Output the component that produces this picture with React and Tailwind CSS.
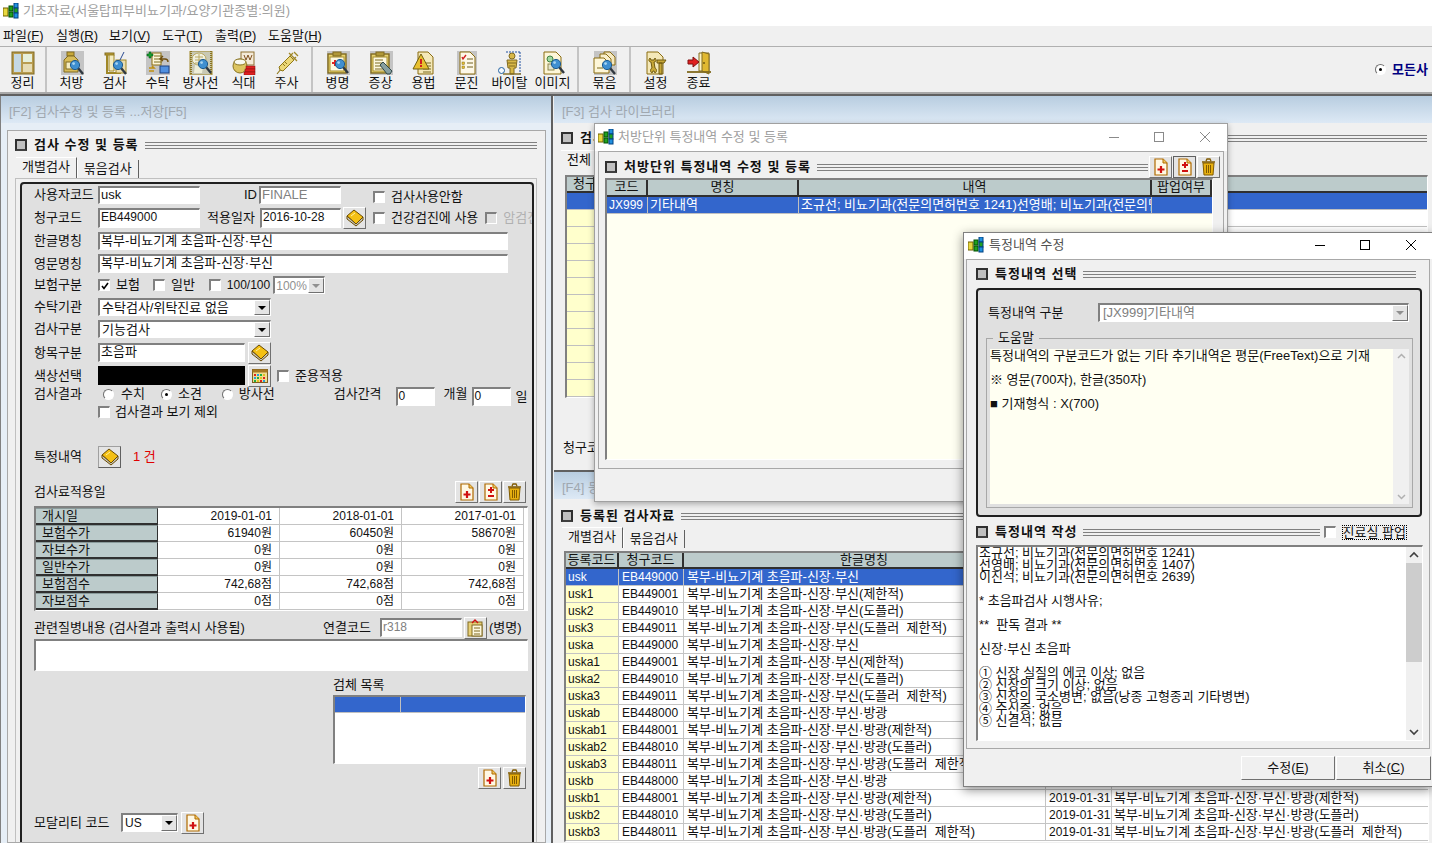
import React from "react";

const sunken = "border-t-2 border-l-2 border-t-[#808080] border-l-[#808080] border-b border-r border-b-white border-r-white bg-white";
const raised = "border border-t-white border-l-white border-b-[#707070] border-r-[#707070] bg-[#e4e4e4] flex items-center justify-center";
const num = "text-[12px]";

const AppIcon = () => (
  <svg width="16" height="16" viewBox="0 0 16 16" className="shrink-0">
    <rect x="0" y="5" width="5" height="8" fill="#e8d840" stroke="#706000" />
    <rect x="6" y="3" width="4" height="5" fill="#20a020" stroke="#005000" />
    <rect x="6" y="9" width="4" height="5" fill="#20a020" stroke="#005000" />
    <rect x="11" y="0" width="4" height="5" fill="#2090e0" stroke="#004080" />
    <rect x="11" y="5" width="4" height="5" fill="#20a020" stroke="#004080" />
    <rect x="11" y="10" width="4" height="5" fill="#2090e0" stroke="#004080" />
  </svg>
);

const Mag = ({ x = 15, y = 14 }) => (
  <g>
    <line x1={x + 3} y1={y + 3} x2={x + 8} y2={y + 9} stroke="#303840" strokeWidth="2.4" />
    <circle cx={x} cy={y} r="4.6" fill="#3f8fd0" stroke="#1c5a90" />
    <circle cx={x - 1.4} cy={y - 1.4} r="1.4" fill="#a8d4f0" />
  </g>
);

const Page = ({ x = 5, y = 1, w = 15, h = 20, fill = "#fdf6d8" }) => (
  <path d={`M${x} ${y}h${w - 5}l5 5v${h - 5}h-${w}z`} fill={fill} stroke="#8a6c10" />
);

const Lines = ({ x, y, n = 3, w = 8 }) => (
  <g stroke="#7a6a20">
    {Array.from({ length: n }).map((_, i) => (
      <line key={i} x1={x} y1={y + i * 3} x2={x + w} y2={y + i * 3} />
    ))}
  </g>
);

const Tool = {
  layout: (
    <g>
      <rect x="1" y="1" width="22" height="22" fill="#b89c50" stroke="#806a20" />
      <rect x="3" y="3" width="7" height="18" fill="#c4d8e4" />
      <rect x="12" y="3" width="9" height="8" fill="#e6f0dc" />
      <rect x="12" y="13" width="9" height="8" fill="#e6dcb4" />
    </g>
  ),
  rx: (
    <g>
      <rect x="1" y="0" width="23" height="24" fill="#c4c4c4" />
      <rect x="7" y="1" width="7" height="4" fill="#c8a838" stroke="#806a20" />
      <path d="M4 9l4-4h6l4 4v12H4z" fill="#d8bc58" stroke="#806a20" />
      <rect x="6" y="11" width="9" height="7" fill="#f4ecc0" stroke="#806a20" />
      <Mag x={15} y={14} />
    </g>
  ),
  test: (
    <g>
      <rect x="2" y="2" width="9" height="2" fill="#c8a838" stroke="#806a20" />
      <path d="M4 4v18h14" fill="none" stroke="#a08828" strokeWidth="2" />
      <path d="M6 4h5v16H6z" fill="#f4ecc0" stroke="#a08828" />
      <rect x="13" y="9" width="10" height="13" fill="#e8dcb0" stroke="#a08828" />
      <line x1="21" y1="1" x2="17" y2="9" stroke="#2a4a90" />
      <Mag x={15} y={14} />
    </g>
  ),
  out: (
    <g>
      <rect x="0" y="0" width="24" height="24" fill="#c4c4c4" />
      <rect x="6" y="2" width="9" height="12" fill="#fdf6d8" stroke="#8a6c10" />
      <Lines x={8} y={5} />
      <path d="M3 1h2v2h2v2H5v2H3V5H1V3h2z" fill="#18a030" stroke="#005010" strokeWidth=".5" />
      <path d="M17 5l-3 3 3 2M14 8h5c2 0 3 1 3 3" fill="none" stroke="#705010" strokeWidth="1.4" />
      <rect x="14" y="15" width="9" height="7" fill="#5090e0" stroke="#1c4080" />
      <path d="M3 17h5l-2-2M8 20H3" fill="none" stroke="#c09010" strokeWidth="1.6" />
    </g>
  ),
  xray: (
    <g>
      <rect x="1" y="0" width="22" height="24" fill="#c8c8b4" stroke="#a08828" />
      <path d="M2 0v24M22 0v24" stroke="#8a7420" strokeWidth="2" strokeDasharray="1 1" />
      <ellipse cx="10" cy="8" rx="7" ry="6" fill="#f0f0e0" stroke="#b8a860" />
      <path d="M6 6h8M6 9h8M6 12h8M10 3v14" stroke="#b8a860" />
      <path d="M6 14l-1 8h8l1-6z" fill="#eeeed8" />
      <Mag x={14} y={13} />
    </g>
  ),
  meal: (
    <g>
      <rect x="9" y="1" width="13" height="13" fill="#f4ead8" stroke="#907030" />
      <path d="M12 4l2 5 2-5 2 5 2-5" fill="none" stroke="#805020" />
      <ellipse cx="8" cy="15" rx="7" ry="7" fill="#dcc460" stroke="#8a7420" />
      <ellipse cx="8" cy="11" rx="6" ry="3" fill="#f8f8f0" stroke="#8a7420" />
      <rect x="14" y="15" width="9" height="3" fill="#e02020" stroke="#801010" strokeWidth=".5" />
      <rect x="13" y="18" width="10" height="3" fill="#e02020" stroke="#801010" strokeWidth=".5" />
      <rect x="12" y="21" width="11" height="3" fill="#e02020" stroke="#801010" strokeWidth=".5" />
    </g>
  ),
  inject: (
    <g>
      <path d="M2 23l4-5" stroke="#907818" strokeWidth="1.2" />
      <path d="M5 19l-1-3L15 5l4 4L8 20z" fill="#ecd878" stroke="#907818" />
      <path d="M15 5l3-3M18 9l3-3M19 1l4 4M14 2l8 8" stroke="#a08828" strokeWidth="1.3" fill="none" />
      <path d="M8 13l2 2M10 11l2 2" stroke="#907818" />
    </g>
  ),
  dx: (
    <g>
      <rect x="1" y="0" width="23" height="24" fill="#c4c4c4" />
      <rect x="2" y="3" width="18" height="19" fill="#e8d470" stroke="#806a20" strokeWidth="1.4" />
      <rect x="4" y="6" width="14" height="14" fill="#fdf8e0" stroke="#a89030" />
      <rect x="7" y="1" width="8" height="4" fill="#b09838" stroke="#806a20" />
      <path d="M6 12h6M9 9v6" stroke="#e02020" strokeWidth="2" />
      <Mag x={14} y={13} />
    </g>
  ),
  sx: (
    <g>
      <rect x="1" y="0" width="23" height="24" fill="#c4c4c4" />
      <rect x="2" y="3" width="18" height="19" fill="#e8d470" stroke="#806a20" strokeWidth="1.4" />
      <rect x="4" y="6" width="14" height="14" fill="#fdf8e0" stroke="#a89030" />
      <rect x="7" y="1" width="8" height="4" fill="#b09838" stroke="#806a20" />
      <Lines x={6} y={9} n={4} w={8} />
      <path d="M11 14l3-3 9 9-2 3-3 0z" fill="#88a0a0" stroke="#304848" />
    </g>
  ),
  usage: (
    <g>
      <Page x={6} y={1} w={15} h={22} fill="#f4e8b8" />
      <Lines x={11} y={12} n={4} w={8} />
      <path d="M9 3L1 18h16z" fill="#e8c030" stroke="#706010" />
      <rect x="8" y="8" width="2" height="5" fill="#d02020" />
      <rect x="8" y="14" width="2" height="2" fill="#d02020" />
    </g>
  ),
  ask: (
    <g>
      <rect x="2" y="0" width="20" height="24" fill="#c4c4c4" />
      <Page x={5} y={1} w={15} h={22} fill="#fdf8e8" />
      <path d="M7 6l1 2 3-4" fill="none" stroke="#d02020" strokeWidth="1.4" />
      <rect x="7" y="11" width="2.5" height="2.5" fill="#e8c030" stroke="#806a20" strokeWidth=".5" />
      <rect x="7" y="15" width="2.5" height="2.5" fill="#e8c030" stroke="#806a20" strokeWidth=".5" />
      <line x1="12" y1="8" x2="18" y2="8" stroke="#706020" />
      <line x1="12" y1="12" x2="18" y2="12" stroke="#706020" />
      <line x1="12" y1="16" x2="18" y2="16" stroke="#706020" />
    </g>
  ),
  vital: (
    <g>
      <path d="M8 1h14M22 1v22" stroke="#2050a0" strokeDasharray="2 1" fill="none" />
      <circle cx="14" cy="5" r="3" fill="#d8b848" stroke="#806a20" />
      <path d="M9 9h10l-1 8h-2v6h-4v-6h-2z" fill="#d8b848" stroke="#806a20" />
      <path d="M10 12h8M11 15h6" stroke="#806a20" />
      <path d="M5 23h18" stroke="#806a20" strokeWidth="1.4" />
      <circle cx="3.5" cy="19.5" r="3" fill="#f4f8fc" stroke="#2060a0" />
    </g>
  ),
  image: (
    <g>
      <Page x={3} y={1} w={17} h={22} />
      <circle cx="9" cy="8" r="3" fill="#a0d8a0" stroke="#408040" />
      <rect x="7" y="13" width="6" height="6" fill="#e4e4cc" stroke="#908a50" />
      <Mag x={15} y={13} />
    </g>
  ),
  bundle: (
    <g>
      <rect x="1" y="0" width="23" height="24" fill="#c4c4c4" />
      <Page x={11} y={1} w={11} h={13} fill="#f4e8c0" />
      <Page x={7} y={3} w={11} h={14} fill="#f8efcc" />
      <Page x={1} y={7} w={15} h={15} fill="#fdf6d8" />
      <line x1="4" y1="17" x2="10" y2="17" stroke="#7a6a20" />
      <Mag x={14} y={14} />
    </g>
  ),
  setup: (
    <g>
      <Page x={3} y={1} w={16} h={22} fill="#f4e8b8" />
      <path d="M6 7c-2 2-1 4 1 4l1 6c-2 1-2 4 0 5l1-2h1l1 2c2-1 2-4 0-5l-1-6c2 0 3-2 1-4l-1 2H7z" fill="#c8a838" stroke="#705a10" />
      <path d="M13 9h9l-2 3h-7zM15 12h3v11h-3z" fill="#c8a838" stroke="#705a10" />
    </g>
  ),
  exit: (
    <g>
      <path d="M12 2h10v18h-10z" fill="#fff4c0" stroke="#806a20" />
      <path d="M15 1l7 2v20l-7-3z" fill="#e0b830" stroke="#806a20" />
      <circle cx="17" cy="12" r="1" fill="#705a10" />
      <path d="M1 9h5V6l6 5-6 5v-3H1z" fill="#e02020" stroke="#801010" />
      <path d="M0 21h24" stroke="#806a20" strokeWidth="1.8" />
    </g>
  ),
};

const BookIcon = () => (
  <svg width="18" height="18" viewBox="0 0 18 18">
    <path d="M1 7L8 1l9 7-7 7z" fill="#f4c014" stroke="#6a4a00" />
    <path d="M1 7v3l9 7 7-6V8l-7 7z" fill="#c8c8c0" stroke="#6a4a00" />
    <path d="M5 7l4-3" stroke="#fff0a0" />
  </svg>
);

const DocIcon = ({ minus }) => (
  <svg width="14" height="18" viewBox="0 0 14 18">
    <path d="M1 1h8l4 4v12H1z" fill="#fff8e4" stroke="#b06a00" strokeWidth="1.2" />
    <path d="M9 1v4h4" fill="#f0c860" stroke="#b06a00" />
    {minus ? (
      <path d="M7 4v6M4 7h6M4 13h6" stroke="#d01010" strokeWidth="2" />
    ) : (
      <path d="M7 8v7M3.5 11.5h7" stroke="#d01010" strokeWidth="2.2" />
    )}
  </svg>
);

const TrashIcon = () => (
  <svg width="15" height="18" viewBox="0 0 15 18">
    <path d="M1 4h13M5 3l1-2h3l1 2" fill="none" stroke="#805a00" strokeWidth="1.3" />
    <path d="M2 5h11l-1 12H3z" fill="#e8b010" stroke="#805a00" />
    <path d="M5.5 7v8M7.5 7v8M9.5 7v8" stroke="#805a00" />
  </svg>
);

const ClipIcon = () => (
  <svg width="17" height="18" viewBox="0 0 17 18">
    <rect x="1" y="3" width="14" height="14" fill="#e8d078" stroke="#806a20" />
    <rect x="5" y="6" width="10" height="11" fill="#fdf8e0" stroke="#806a20" />
    <path d="M7 9h6M7 12h6M7 15h6" stroke="#806a20" />
    <path d="M5 4l3-3 3 3" fill="none" stroke="#d01010" strokeWidth="1.4" />
  </svg>
);

const PaletteIcon = () => (
  <svg width="16" height="14" viewBox="0 0 16 14">
    <rect x="0.5" y="0.5" width="15" height="13" fill="#f0dc90" stroke="#806020" />
    <rect x="0.5" y="0.5" width="15" height="3" fill="#a87820" />
    {[5, 8, 11].map((y, r) =>
      [2, 5, 8, 11].map((x, c) => (
        <rect key={x + "-" + y} x={x} y={y} width="2" height="2" fill={["#e02020", "#20a0e0", "#20b040", "#e0c020"][(r + c) % 4]} />
      ))
    )}
  </svg>
);

const Check = ({ on, dim, className = "" }) => (
  <span className={`w-[12px] h-[12px] shrink-0 flex items-center justify-center ${sunken} ${dim ? "!bg-[#e0e0e0]" : ""} ${className}`}>
    {on && (
      <svg width="8" height="8" viewBox="0 0 8 8">
        <path d="M1 4l2 2.5L7 1" fill="none" stroke="#000" strokeWidth="1.6" />
      </svg>
    )}
  </span>
);

const Radio = ({ on, className = "" }) => (
  <span className={`w-[11px] h-[11px] shrink-0 rounded-full flex items-center justify-center bg-white border border-t-[#707070] border-l-[#707070] border-b-white border-r-white ${className}`}>
    {on && <span className="w-[3px] h-[3px] rounded-full bg-black" />}
  </span>
);

const Arrow = ({ dim }) => (
  <span className={`w-[16px] h-full shrink-0 ${raised}`}>
    <span className={`border-x-[4px] border-x-transparent border-t-[4px] ${dim ? "border-t-[#909090]" : "border-t-black"}`} />
  </span>
);

const Section = ({ title, children, className = "" }) => (
  <div className={`flex items-center h-[14px] ${className}`}>
    <span className="w-[12px] h-[12px] shrink-0 border-2 border-[#303030] bg-[#c0c0c0] border-b-[#404040]" />
    <span className="ml-[7px] font-bold tracking-[1px] whitespace-nowrap">{title}</span>
    <span className="ml-[6px] flex-1 h-[7px] border-y border-[#808080] flex items-center min-w-0">
      <span className="w-full h-px bg-[#808080]" />
    </span>
    {children}
  </div>
);

const Tabs = ({ names, className = "" }) => (
  <div className={`flex items-end ${className}`}>
    {names.map((n, i) => (
      <span
        key={n}
        className={`whitespace-nowrap px-[6px] border-r border-r-[#606060] ${i === 0 ? "h-[21px] border-t border-t-white bg-[#f0f0f0] leading-[17px]" : "h-[18px] leading-[18px] border-l border-l-white"}`}
      >
        {n}
      </span>
    ))}
  </div>
);

const PanelHead = ({ children }) => (
  <div className="h-[27px] shrink-0 bg-gradient-to-b from-[#b8cde0] to-[#dde9f5] pl-[8px] pt-[8px] text-[#a0a8b0] leading-[16px] whitespace-nowrap">
    {children}
  </div>
);

const Label = ({ children, className = "" }) => <span className={`w-[64px] shrink-0 whitespace-nowrap ${className}`}>{children}</span>;

const Input = ({ value, w, dim, className = "" }) => (
  <span className={`${sunken} ${w} h-full shrink-0 pl-px leading-[14px] overflow-hidden whitespace-nowrap ${dim ? "text-[#808080]" : ""} ${className}`}>{value}</span>
);

const Select = ({ value }) => (
  <span className={`${sunken} w-[173px] h-full flex items-center justify-between pl-[2px]`}>
    <span>{value}</span>
    <Arrow />
  </span>
);

const IconBtn = ({ children, className = "" }) => <span className={`${raised} w-[23px] h-[22px] shrink-0 ${className}`}>{children}</span>;

const feeRows = [
  ["개시일", "2019-01-01", "2018-01-01", "2017-01-01"],
  ["보험수가", "61940원", "60450원", "58670원"],
  ["자보수가", "0원", "0원", "0원"],
  ["일반수가", "0원", "0원", "0원"],
  ["보험점수", "742,68점", "742,68점", "742,68점"],
  ["자보점수", "0점", "0점", "0점"],
];

const base = "복부-비뇨기계 초음파-신장·부신";
const suffix = ["", "(제한적)", "(도플러)", "(도플러  제한적)"];
const groups = [
  ["usk", base, "EB4490"],
  ["uska", base, "EB4490"],
  ["uskab", base + "·방광", "EB4480"],
  ["uskb", base + "·방광", "EB4480"],
];
const regRows = groups.flatMap(([code, name, claim]) =>
  ["00", "01", "10", "11"].map((tail, i) => ({
    code: code + (i === 0 ? "" : i),
    claim: claim + tail,
    name: name + suffix[i],
  }))
);

const helpLines = ["특정내역의 구분코드가 없는 기타 추기내역은 평문(FreeText)으로 기재", "※ 영문(700자), 한글(350자)", "■ 기재형식 : X(700)"];
const noteLines = [
  "조규선; 비뇨기과(전문의면허번호 1241)",
  "선영배; 비뇨기과(전문의면허번호 1407)",
  "이진석; 비뇨기과(전문의면허번호 2639)",
  "",
  "* 초음파검사 시행사유;",
  "",
  "**  판독 결과 **",
  "",
  "신장·부신 초음파",
  "",
  "① 신장 실질의 에코 이상; 없음",
  "② 신장의 크기 이상; 없음",
  "③ 신장의 국소병변; 없음(낭종 고형종괴 기타병변)",
  "④ 수신증; 없음",
  "⑤ 신결석; 없음",
];

const toolbar = [
  [["정리", "layout"]],
  [["처방", "rx"], ["검사", "test"], ["수탁", "out"], ["방사선", "xray"], ["식대", "meal"], ["주사", "inject"]],
  [["병명", "dx"], ["증상", "sx"], ["용법", "usage"], ["문진", "ask"], ["바이탈", "vital"], ["이미지", "image"]],
  [["묶음", "bundle"]],
  [["설정", "setup"], ["종료", "exit"]],
];
const groupClass = [
  "w-[47px] pl-px border-r-2 border-r-[#c4c4c4]",
  "w-[266px] pl-[3px] border-r-2 border-r-[#c4c4c4]",
  "w-[266px] pl-[3px] border-r-2 border-r-[#c4c4c4]",
  "w-[52px] pl-[4px] border-r-2 border-r-[#c4c4c4]",
  "pl-[3px]",
];
const menus = [["파일(", "F"], ["실행(", "R"], ["보기(", "V"], ["도구(", "T"], ["출력(", "P"], ["도움말(", "H"]];

function WinControls({ dark }) {
  const c = dark ? "#000" : "#8a8a8a";
  return (
    <svg width="108" height="12" viewBox="0 0 108 12" className="shrink-0">
      <line x1="0" y1="6.5" x2="10" y2="6.5" stroke={c} />
      <rect x="45.5" y="1.5" width="9" height="9" fill="none" stroke={c} />
      <path d="M91 1l10 10M101 1L91 11" stroke={c} />
    </svg>
  );
}

function Toolbar() {
  return (
    <div className="h-[48px] shrink-0 bg-[#f0f0f0] border-t border-t-[#b0b0b0] flex items-stretch border-b-2 border-b-[#a8a8a8]">
      {toolbar.map((group, i) => (
        <div key={i} className={`flex ${groupClass[i]}`}>
          {group.map(([name, icon]) => (
            <div key={name} className="w-[43px] flex flex-col items-center pt-[4px]">
              <svg width="24" height="24" viewBox="0 0 24 24">{Tool[icon]}</svg>
              <span className="leading-[14px] mt-px whitespace-nowrap">{name}</span>
            </div>
          ))}
        </div>
      ))}
      <div className="ml-auto w-[57px] flex items-center gap-[6px] overflow-hidden shrink-0">
        <Radio on />
        <span className="font-bold text-[#000080] whitespace-nowrap">모든사</span>
      </div>
    </div>
  );
}

function LeftPanel() {
  return (
    <div className="w-[553px] shrink-0 flex flex-col border-l border-l-[#808080] border-r-2 border-r-[#606060]">
      <PanelHead>[F2] 검사수정 및 등록 ...저장[F5]</PanelHead>
      <div className="flex-1 bg-[#e6eef6] pl-[6px] pr-[5px] pt-[7px] min-h-0">
        <div className="h-full bg-[#f0f0f0] border border-[#a8a8a8] pl-[7px] pr-[8px] pt-[7px] overflow-hidden">
          <Section title="검사 수정 및 등록" />
          <Tabs names={["개별검사", "묶음검사"]} className="mt-[5px] ml-px" />
          <div className="border border-[#c0c0c0] pl-[4px] pr-[2px] pb-[20px] h-[700px]">
            <div className="h-[680px] mt-[3px] bg-[#e0e0e0] border-2 border-[#202020] rounded-t-[4px] pl-[12px] pt-[2px] overflow-hidden">
              <div className="flex items-center h-[18px]">
                <Label>사용자코드</Label>
                <Input value="usk" w="w-[102px]" />
                <span className="ml-[44px] w-[15px]">ID</span>
                <Input value="FINALE" w="w-[82px]" dim />
                <Check className="ml-[32px] mt-[3px]" />
                <span className="ml-[6px] mt-[3px]">검사사용안함</span>
              </div>
              <div className="flex items-center h-[20px] mt-[4px]">
                <Label>청구코드</Label>
                <Input value="EB449000" w="w-[102px]" className={num} />
                <span className="ml-[7px] w-[53px] shrink-0 whitespace-nowrap">적용일자</span>
                <Input value="2016-10-28" w="w-[81px]" className={num} />
                <IconBtn className="ml-[2px]"><BookIcon /></IconBtn>
                <Check className="ml-[7px]" />
                <span className="ml-[6px] whitespace-nowrap">건강검진에 사용</span>
                <Check dim className="ml-[7px]" />
                <span className="ml-[6px] text-[#b0b0b0] whitespace-nowrap">암검진</span>
              </div>
              <div className="flex items-center h-[18px] mt-[4px]">
                <Label>한글명칭</Label>
                <Input value={base} w="w-[410px]" />
              </div>
              <div className="flex items-center h-[19px] mt-[4px]">
                <Label>영문명칭</Label>
                <Input value={base} w="w-[410px]" />
              </div>
              <div className="flex items-center h-[18px] mt-[3px]">
                <Label>보험구분</Label>
                <Check on />
                <span className="ml-[6px]">보험</span>
                <Check className="ml-[13px]" />
                <span className="ml-[6px]">일반</span>
                <Check className="ml-[14px]" />
                <span className={`ml-[6px] ${num}`}>100/100</span>
                <span className={`${sunken} ml-[3px] w-[52px] h-full flex items-center justify-between pl-px text-[#909090] ${num}`}>
                  100%
                  <Arrow dim />
                </span>
              </div>
              <div className="flex items-center h-[18px] mt-[4px]">
                <Label>수탁기관</Label>
                <Select value="수탁검사/위탁진료 없음" />
              </div>
              <div className="flex items-center h-[18px] mt-[4px]">
                <Label>검사구분</Label>
                <Select value="기능검사" />
              </div>
              <div className="flex items-center h-[19px] mt-[5px]">
                <Label>항목구분</Label>
                <Input value="초음파" w="w-[147px]" />
                <IconBtn className="ml-[3px]"><BookIcon /></IconBtn>
              </div>
              <div className="flex items-center h-[19px] mt-[4px]">
                <Label>색상선택</Label>
                <span className="w-[147px] h-full bg-black shrink-0" />
                <IconBtn className="ml-[3px]"><PaletteIcon /></IconBtn>
                <Check className="ml-[6px]" />
                <span className="ml-[6px]">준용적용</span>
              </div>
              <div className="flex items-center h-[14px] mt-[2px]">
                <Label>검사결과</Label>
                <Radio className="ml-[5px]" />
                <span className="ml-[7px]">수치</span>
                <Radio on className="ml-[16px]" />
                <span className="ml-[6px]">소견</span>
                <Radio className="ml-[20px]" />
                <span className="ml-[6px]">방사선</span>
                <span className="ml-[59px]">검사간격</span>
                <Input value="0" w="w-[39px]" className={`ml-[14px] !h-[19px] mt-[4px] ${num}`} />
                <span className="ml-[9px]">개월</span>
                <Input value="0" w="w-[39px]" className={`ml-[4px] !h-[19px] mt-[4px] ${num}`} />
                <span className="ml-[5px] mt-[6px]">일</span>
              </div>
              <div className="flex items-center h-[14px] mt-[4px] pl-[64px]">
                <Check />
                <span className="ml-[5px]">검사결과 보기 제외</span>
              </div>
              <div className="flex items-center h-[22px] mt-[27px]">
                <Label>특정내역</Label>
                <IconBtn className="!border-[#606060] !border-t-[#a0a0a0] !border-l-[#a0a0a0]"><BookIcon /></IconBtn>
                <span className="ml-[12px] text-[#e00000]">1 건</span>
              </div>
              <div className="flex items-center justify-between h-[21px] mt-[13px] pr-[6px]">
                <span>검사료적용일</span>
                <span className="flex gap-px">
                  <IconBtn><DocIcon /></IconBtn>
                  <IconBtn><DocIcon minus /></IconBtn>
                  <IconBtn><TrashIcon /></IconBtn>
                </span>
              </div>
              <div className={`${sunken} mt-[4px] w-[494px] shrink-0`}>
                {feeRows.map((r) => (
                  <div key={r[0]} className="flex h-[17px] leading-[14px]">
                    <span className="w-[122px] bg-[#bccbcb] border-r border-b-2 border-[#303030] pl-[6px] border-t border-t-[#8a9a9a]">{r[0]}</span>
                    {r.slice(1).map((v, i) => (
                      <span key={i} className="w-[122px] text-right pr-[7px] border-r border-b border-[#c4c4c4] text-[12px] leading-[16px]">{v}</span>
                    ))}
                  </div>
                ))}
              </div>
              <div className="flex items-center h-[23px] mt-[5px] w-[494px]">
                <span className="w-[289px] shrink-0 whitespace-nowrap">관련질병내용 (검사결과 출력시 사용됨)</span>
                <span className="w-[57px] shrink-0">연결코드</span>
                <Input value="r318" w="w-[82px]" dim className={`!h-[19px] ${num}`} />
                <IconBtn className="ml-[2px]"><ClipIcon /></IconBtn>
                <span className="ml-[2px] whitespace-nowrap">(병명)</span>
              </div>
              <div className={`${sunken} h-[32px] w-[494px]`} />
              <div className="ml-[299px] mt-[7px] h-[14px] leading-[14px] whitespace-nowrap">검체 목록</div>
              <div className={`${sunken} ml-[299px] mt-[3px] w-[193px] h-[69px]`}>
                <div className="h-[16px] bg-[#3366cc] flex border-b border-[#c0c0c0]">
                  <span className="w-[66px] border-r border-[#c0c0c0]" />
                </div>
              </div>
              <div className="flex justify-end gap-[2px] w-[492px] mt-[3px]">
                <IconBtn><DocIcon /></IconBtn>
                <IconBtn><TrashIcon /></IconBtn>
              </div>
              <div className="flex items-center h-[21px] mt-[23px]">
                <span className="w-[87px] whitespace-nowrap">모달리티 코드</span>
                <span className={`${sunken} w-[57px] h-[19px] flex items-center justify-between pl-[2px] ${num}`}>
                  US
                  <Arrow />
                </span>
                <IconBtn className="ml-[3px]"><DocIcon /></IconBtn>
              </div>
            </div>
          </div>
        </div>
      </div>
    </div>
  );
}

function LibraryPanel() {
  return (
    <div className="h-[376px] shrink-0 flex flex-col">
      <PanelHead>[F3] 검사 라이브러리</PanelHead>
      <div className="flex-1 bg-[#f0f0f0] pl-[7px] pt-[8px] min-h-0 overflow-hidden border-b-2 border-b-[#606060]">
        <Section title="검사 라이브러리" className="mr-[5px]" />
        <Tabs names={["전체"]} className="mt-[5px]" />
        <div className={`${sunken} !bg-[#f0f0f0] ml-[4px] mt-[4px] w-[863px]`}>
          <div className="h-[16px] flex bg-[#bccbcb] border-b-2 border-b-[#303030] leading-[14px]">
            <span className="w-[28px] border-r-2 border-[#303030] pl-[6px] overflow-hidden whitespace-nowrap">청구코드</span>
          </div>
          {Array.from({ length: 12 }).map((_, i) => (
            <div key={i} className={`h-[17px] flex border-b border-[#c0c0c0] ${i === 0 ? "bg-[#3366cc]" : "bg-white"}`}>
              <span className={`w-[28px] border-r border-[#c0c0c0] ${i === 0 ? "" : "bg-[#ffffcc]"}`} />
            </div>
          ))}
        </div>
        <div className="mt-[40px] ml-[2px] whitespace-nowrap">청구코드</div>
      </div>
    </div>
  );
}

function RegisteredPanel() {
  return (
    <div className="flex-1 min-h-0 flex flex-col">
      <PanelHead>[F4] 등록된 검사자료</PanelHead>
      <div className="flex-1 bg-[#f0f0f0] pl-[7px] pt-[10px] overflow-hidden">
        <Section title="등록된 검사자료" className="mr-[5px]" />
        <Tabs names={["개별검사", "묶음검사"]} className="mt-[4px] ml-px" />
        <div className={`${sunken} mt-[3px] ml-[3px] w-[865px]`}>
          <div className="h-[16px] flex bg-[#bccbcb] leading-[14px] text-center border-b-2 border-b-[#303030] whitespace-nowrap">
            <span className="w-[53px] border-r-2 border-[#303030] overflow-hidden">등록코드</span>
            <span className="w-[65px] border-r-2 border-[#303030]">청구코드</span>
            <span className="w-[362px] border-r-2 border-[#303030]">한글명칭</span>
            <span className="w-[66px] border-r-2 border-[#303030]">적용일자</span>
            <span className="flex-1">영문명칭</span>
          </div>
          {regRows.map((r, i) => (
            <div key={r.code} className={`h-[17px] flex leading-[16px] border-b border-[#c4c4c4] whitespace-nowrap ${i === 0 ? "bg-[#3366cc] text-white" : ""}`}>
              <span className={`w-[53px] pl-[2px] border-r border-[#c4c4c4] ${num} ${i === 0 ? "" : "bg-[#ffffcc]"}`}>{r.code}</span>
              <span className={`w-[65px] pl-[3px] border-r border-[#c4c4c4] ${num}`}>{r.claim}</span>
              <span className="w-[362px] pl-[3px] border-r border-[#c4c4c4] overflow-hidden whitespace-pre">{r.name}</span>
              <span className={`w-[66px] pl-[3px] border-r border-[#c4c4c4] ${num}`}>2019-01-31</span>
              <span className="flex-1 pl-[2px] overflow-hidden whitespace-pre">{r.name}</span>
            </div>
          ))}
        </div>
      </div>
    </div>
  );
}

function ItemWindow() {
  return (
    <div className="absolute left-[594px] top-[123px] w-[634px] h-[379px] bg-white border border-[#a0a0a0] shadow-[0_2px_6px_rgba(0,0,0,0.3)] flex flex-col">
      <div className="h-[27px] shrink-0 flex items-center pl-[3px] pr-[10px] pb-[2px] text-[#a0a0a0]">
        <AppIcon />
        <span className="ml-[4px] flex-1 whitespace-nowrap">처방단위 특정내역 수정 및 등록</span>
        <WinControls />
      </div>
      <div className="flex-1 bg-[#f0f0f0] px-[3px] pb-[1px]">
        <div className="border border-[#a8a8a8] h-[318px] pl-[6px] pr-[3px] pt-[8px]">
          <Section title="처방단위 특정내역 수정 및 등록">
            <span className="flex gap-px ml-px">
              <IconBtn><DocIcon /></IconBtn>
              <IconBtn className="!border-[#606060]"><DocIcon minus /></IconBtn>
              <IconBtn><TrashIcon /></IconBtn>
            </span>
          </Section>
          <div className={`${sunken} !bg-[#fffff2] mt-[4px] w-[608px] h-[282px]`}>
            <div className="h-[17px] flex bg-[#bccbcb] leading-[14px] text-center border-b-2 border-b-[#303030] whitespace-nowrap">
              <span className="w-[41px] border-r-2 border-[#303030]">코드</span>
              <span className="w-[151px] border-r-2 border-[#303030]">명칭</span>
              <span className="w-[353px] border-r-2 border-[#303030]">내역</span>
              <span className="w-[60px] border-r-2 border-[#303030]">팝업여부</span>
            </div>
            <div className="h-[17px] flex bg-[#3366cc] text-white leading-[16px] border-b border-[#c0c0c0] whitespace-nowrap">
              <span className={`w-[41px] pl-[2px] border-r border-[#c0c0c0] ${num}`}>JX999</span>
              <span className="w-[151px] pl-[2px] border-r border-[#c0c0c0]">기타내역</span>
              <span className="w-[353px] pl-[2px] border-r border-[#c0c0c0] overflow-hidden">조규선; 비뇨기과(전문의면허번호 1241)선영배; 비뇨기과(전문의면허번호 1407)</span>
              <span className="w-[60px]" />
            </div>
          </div>
        </div>
      </div>
    </div>
  );
}

function EditWindow() {
  return (
    <div className="absolute left-[963px] top-[232px] w-[469px] h-[555px] bg-white border border-[#808080] border-r-0 shadow-[0_3px_10px_rgba(0,0,0,0.45)] flex flex-col">
      <div className="h-[26px] shrink-0 flex items-center pl-[4px] pr-[9px] pb-[2px] text-[#505050]">
        <AppIcon />
        <span className="ml-[5px] flex-1 whitespace-nowrap">특정내역 수정</span>
        <WinControls dark />
      </div>
      <div className="flex-1 bg-[#f0f0f0] flex flex-col min-h-0">
        <div className="mx-[2px] border border-[#a8a8a8] h-[490px] pl-[9px] pr-[1px] pt-[7px]">
          <Section title="특정내역 선택" className="mr-[12px]" />
          <div className="mt-[7px] h-[229px] w-[446px] bg-[#e0e0e0] border-2 border-[#202020] rounded-[4px] pl-[10px] pt-[13px] flex flex-col">
            <div className="flex items-center h-[19px] shrink-0">
              <span className="w-[110px] whitespace-nowrap">특정내역 구분</span>
              <span className={`${sunken} w-[311px] h-full flex items-center justify-between pl-[3px] text-[#808080]`}>
                [JX999]기타내역
                <Arrow dim />
              </span>
            </div>
            <div className="relative mt-[16px] h-[170px] w-[427px] -ml-[2px] border border-[#a8a8a8] p-[3px] pt-[10px]">
              <span className="absolute left-[6px] -top-[8px] px-[5px] bg-[#e0e0e0] leading-[14px]">도움말</span>
              <div className="h-full flex bg-[#fffff2]">
                <div className="flex-1 flex flex-col gap-[10px] leading-[14px] whitespace-nowrap overflow-hidden">
                  {helpLines.map((l) => <span key={l}>{l}</span>)}
                </div>
                <div className="w-[16px] bg-[#f0f0f0] flex flex-col justify-between items-center py-[4px] text-[#b0b0b0]">
                  <svg width="9" height="6" viewBox="0 0 9 6"><path d="M1 5l3.5-3.5L8 5" fill="none" stroke="currentColor" strokeWidth="1.5" /></svg>
                  <svg width="9" height="6" viewBox="0 0 9 6"><path d="M1 1l3.5 3.5L8 1" fill="none" stroke="currentColor" strokeWidth="1.5" /></svg>
                </div>
              </div>
            </div>
          </div>
          <Section title="특정내역 작성" className="mt-[8px] mr-[21px]">
            <Check className="ml-[4px]" />
            <span className="ml-[6px] border border-dotted border-black leading-[13px] whitespace-nowrap">진료실 팝업</span>
          </Section>
          <div className={`${sunken} mt-[6px] w-[447px] h-[196px] flex`}>
            <div className="flex-1 pl-px overflow-hidden">
              {noteLines.map((l, i) => (
                <div key={i} className="h-[12px] leading-[12px] whitespace-pre">{l}</div>
              ))}
            </div>
            <div className="w-[16px] bg-[#f0f0f0] flex flex-col items-center">
              <svg width="16" height="16" viewBox="0 0 16 16" className="shrink-0"><path d="M4 10l4-4 4 4" fill="none" stroke="#404040" strokeWidth="1.6" /></svg>
              <div className="w-full h-[99px] bg-[#cdcdcd]" />
              <svg width="16" height="16" viewBox="0 0 16 16" className="shrink-0 mt-auto"><path d="M4 6l4 4 4-4" fill="none" stroke="#404040" strokeWidth="1.6" /></svg>
            </div>
          </div>
        </div>
        <div className="flex justify-end pr-px mt-[7px] gap-px">
          <span className={`${raised} w-[94px] h-[24px] !bg-[#f0f0f0]`}>수정(<u>E</u>)</span>
          <span className={`${raised} w-[95px] h-[24px] !bg-[#f0f0f0]`}>취소(<u>C</u>)</span>
        </div>
      </div>
    </div>
  );
}

export default function App() {
  return (
    <div className="relative w-[1432px] h-[843px] overflow-hidden bg-[#f0f0f0] text-[13px] text-[#111] font-['Liberation_Sans','Noto_Sans_CJK_KR',sans-serif] flex flex-col">
      <div className="h-[26px] shrink-0 bg-white flex items-center pl-[3px] text-[#a0a0a0] pb-[4px]">
        <AppIcon />
        <span className="ml-[4px] whitespace-nowrap">기초자료(서울탑피부비뇨기과/요양기관종별:의원)</span>
      </div>
      <div className="h-[20px] shrink-0 flex items-center pl-[3px]">
        {menus.map(([name, key]) => (
          <span key={key} className="w-[53px] whitespace-nowrap">
            {name}<u>{key}</u>)
          </span>
        ))}
      </div>
      <Toolbar />
      <div className="h-[2px] shrink-0 bg-[#606060]" />
      <div className="flex-1 min-h-0 flex">
        <LeftPanel />
        <div className="flex-1 min-w-0 flex flex-col pl-px">
          <LibraryPanel />
          <RegisteredPanel />
        </div>
      </div>
      <ItemWindow />
      <EditWindow />
    </div>
  );
}
